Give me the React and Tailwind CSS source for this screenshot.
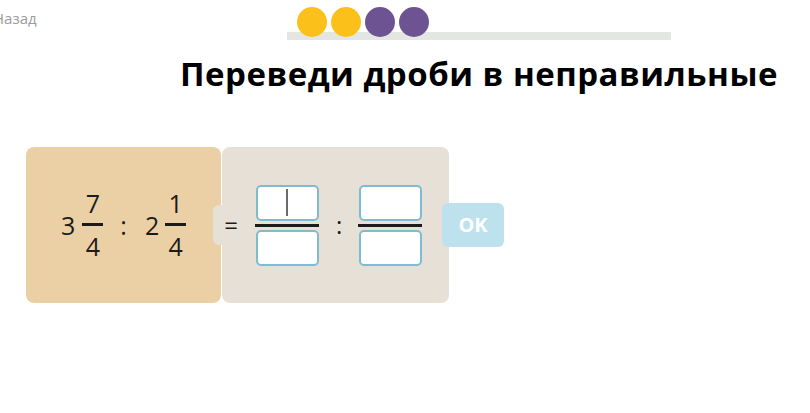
import React from "react";

const FONT = { fontFamily: "'Open Sans', 'Liberation Sans', sans-serif" };

const Frac = ({ top, bottom }) => (
  <div className="flex flex-col items-center">
    <span className="text-[25px] leading-none">{top}</span>
    <div className="mt-[7px] h-[3px] w-[21px] bg-[#1b1b1b]" />
    <span className="mt-[8px] text-[25px] leading-none">{bottom}</span>
  </div>
);

const InputBox = ({ cursor }) => (
  <div className="flex h-[36px] w-[63px] items-center justify-center rounded-[5px] border-2 border-[#7fbccf] bg-white">
    {cursor && <div className="h-[27px] w-[2px] bg-[#6b6b6b]" />}
  </div>
);

const FracInput = ({ cursor }) => (
  <div className="flex flex-col items-center">
    <InputBox cursor={cursor} />
    <div className="my-[3px] h-[3px] w-[64px] bg-[#1b1b1b]" />
    <InputBox />
  </div>
);

export default function App() {
  const dots = ["#fbc11a", "#fbc11a", "#6d5391", "#6d5391"];

  return (
    <div className="h-[413px] w-[810px] overflow-hidden bg-white text-[#1b1b1b]" style={FONT}>
      {/* header */}
      <div className="flex h-[40px]">
        <div className="-ml-[7px] w-[155px] shrink-0">
          <span className="mt-[11px] block text-[15px] leading-none text-[#9c9c9c]">Назад</span>
        </div>
        <div className="flex flex-1 justify-center">
          <div className="w-[384px]">
            <div className="relative z-10 flex gap-[4px] pl-[10px] pt-[7px]">
              {dots.map((c, i) => (
                <div key={i} className="h-[30px] w-[30px] rounded-full" style={{ backgroundColor: c }} />
              ))}
            </div>
            <div className="-mt-[5px] h-[8px] w-full bg-[#e4e6e2]" />
          </div>
        </div>
      </div>

      {/* title */}
      <div className="mt-[17px] flex pl-[148px]">
        <h1 className="flex-1 text-center text-[33px] font-bold leading-none tracking-[0.5px] whitespace-nowrap text-black">
          Переведи дроби в неправильные
        </h1>
      </div>

      {/* task */}
      <div className="mt-[57px] flex items-center pl-[26px]">
        <div className="flex h-[156px] w-[195px] items-center rounded-[8px] bg-[#ebd0a6] pl-[35px]">
          <span className="text-[25px] leading-none">3</span>
          <div className="ml-[7px]">
            <Frac top="7" bottom="4" />
          </div>
          <span className="ml-[17px] text-[25px] leading-none">:</span>
          <span className="ml-[18px] text-[25px] leading-none">2</span>
          <div className="ml-[6px]">
            <Frac top="1" bottom="4" />
          </div>
        </div>
        <div className="ml-px flex h-[156px] w-[227px] items-center rounded-[8px] bg-[#e7e0d6]">
          <div className="-ml-[9px] flex h-[40px] w-[28px] items-center justify-center rounded-l-[6px] bg-[#e7e0d6] pl-[8px]">
            <span className="text-[24px] leading-none">=</span>
          </div>
          <div className="ml-[14px]">
            <FracInput cursor />
          </div>
          <span className="ml-[17px] text-[24px] leading-none">:</span>
          <div className="ml-[16px]">
            <FracInput />
          </div>
        </div>
        <div className="-ml-[7px] flex h-[44px] w-[62px] items-center justify-center rounded-[6px] bg-[#bde2ee]">
          <span className="text-[20px] font-bold leading-none text-white">OK</span>
        </div>
      </div>
    </div>
  );
}
